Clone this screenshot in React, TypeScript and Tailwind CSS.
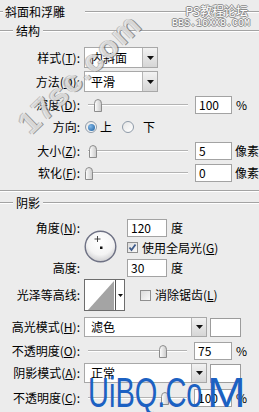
import React from "react";

const U = ({ c }: { c: string }) => <span className="underline underline-offset-[1px]">{c}</span>;

function Line({ className = "" }: { className?: string }) {
  return <div className={"h-0 border-t border-t-[#a3a3a3] border-b border-b-white " + className} />;
}

function Label({ children }: { children: React.ReactNode }) {
  return <div className="w-[80px] shrink-0 text-right whitespace-nowrap">{children}</div>;
}

function Arrow() {
  return (
    <div className="w-[15px] h-full shrink-0 border-l border-[#b5b5b5] bg-gradient-to-b from-[#f2f2f2] to-[#d6d6d6] flex items-center justify-center">
      <svg width="7" height="4" viewBox="0 0 7 4"><path d="M0 0 H7 L3.5 4 Z" fill="#111" /></svg>
    </div>
  );
}

function Select({ w, text }: { w: string; text: string }) {
  return (
    <div className={"h-full bg-white border border-[#a8a8a8] flex items-center " + w}>
      <div className="flex-1 pl-[6px] whitespace-nowrap">{text}</div>
      <Arrow />
    </div>
  );
}

function Input({ v, w = "w-[37px]" }: { v: string; w?: string }) {
  return (
    <div className={"h-[18px] bg-white border border-[#a3a3a3] flex items-center pl-[3px] shrink-0 " + w}>{v}</div>
  );
}

function Slider({ pos, w = "w-[100px]" }: { pos: number; w?: string }) {
  return (
    <div className={"relative h-[18px] shrink-0 " + w}>
      <div className="absolute left-0 right-0 top-[8px] h-0 border-t border-t-[#b3b3b3] border-b border-b-white" />
      <svg className="absolute top-[3px]" style={{ left: pos }} width="10" height="13" viewBox="0 0 10 13">
        <defs>
          <linearGradient id="tg" x1="0" x2="1" y1="0" y2="0">
            <stop offset="0" stopColor="#ffffff" />
            <stop offset="1" stopColor="#c9c9c9" />
          </linearGradient>
        </defs>
        <path d="M1.5 4.5 Q1.5 0.5 5 0.5 Q8.5 0.5 8.5 4.5 L8.5 12.5 L1.5 12.5 Z" fill="url(#tg)" stroke="#8c8c8c" strokeWidth="1" />
      </svg>
    </div>
  );
}

function Radio({ on }: { on?: boolean }) {
  return (
    <div className="w-[12px] h-[12px] rounded-full border border-[#8e9aa8] bg-gradient-to-br from-[#e6e6e6] to-[#ffffff] flex items-center justify-center shrink-0">
      {on && <div className="w-[7px] h-[7px] rounded-full bg-[radial-gradient(circle_at_35%_35%,#7fb6e8,#1d5f9e)]" />}
    </div>
  );
}

function Check({ on }: { on?: boolean }) {
  return (
    <div className="w-[11px] h-[11px] border border-[#8f8f8f] bg-gradient-to-br from-[#dcdcdc] to-[#fafafa] flex items-center justify-center shrink-0">
      {on && (
        <svg width="9" height="9" viewBox="0 0 9 9"><path d="M1.5 4.5 L3.5 7 L7.5 1.5" fill="none" stroke="#3d5a8a" strokeWidth="1.8" /></svg>
      )}
    </div>
  );
}

function Group({ t }: { t: string }) {
  return (
    <div className="flex items-center h-[16px]">
      <Line className="w-[13px]" />
      <span className="px-[3px]">{t}</span>
      <Line className="flex-1" />
    </div>
  );
}

export default function App() {
  return (
    <div className="relative w-[259px] h-[412px] overflow-hidden bg-[#ececec] text-[12px] leading-none text-black font-['Noto_Sans_CJK_SC',sans-serif]">
      <div className="flex flex-col">
        {/* title */}
        <div className="mt-[4px] flex items-center h-[16px]">
          <Line className="w-[3px]" />
          <span className="pl-[2px] pr-[20px]">斜面和浮雕</span>
          <Line className="flex-1" />
        </div>
        <div className="mt-[3px]"><Group t="结构" /></div>

        <div className="mt-[8px] flex items-center h-[21px]">
          <Label>样式(<U c="T" />):</Label>
          <div className="ml-[4px] h-full"><Select w="w-[74px]" text="内斜面" /></div>
        </div>
        <div className="mt-[3px] flex items-center h-[21px]">
          <Label>方法(<U c="Q" />):</Label>
          <div className="ml-[4px] h-full"><Select w="w-[74px]" text="平滑" /></div>
        </div>
        <div className="mt-[4px] flex items-center h-[18px]">
          <Label>深度(<U c="D" />):</Label>
          <div className="ml-[8px]"><Slider pos={5} /></div>
          <div className="ml-[7px]"><Input v="100" /></div>
          <span className="ml-[4px]">%</span>
        </div>
        <div className="mt-[4px] flex items-center h-[18px]">
          <Label>方向:</Label>
          <div className="ml-[5px]"><Radio on /></div>
          <span className="ml-[3px]">上</span>
          <div className="ml-[10px]"><Radio /></div>
          <span className="ml-[9px]">下</span>
        </div>
        <div className="mt-[6px] flex items-center h-[18px]">
          <Label>大小(<U c="Z" />):</Label>
          <div className="ml-[8px]"><Slider pos={0} /></div>
          <div className="ml-[7px]"><Input v="5" /></div>
          <span className="ml-[3px]">像素</span>
        </div>
        <div className="mt-[4px] flex items-center h-[18px]">
          <Label>软化(<U c="F" />):</Label>
          <div className="ml-[8px]"><Slider pos={-4} /></div>
          <div className="ml-[7px]"><Input v="0" /></div>
          <span className="ml-[3px]">像素</span>
        </div>

        <Line className="mt-[8px]" />
        <div className="mt-[3px]"><Group t="阴影" /></div>

        {/* angle block */}
        <div className="mt-[8px] flex h-[58px]">
          <div className="w-[80px] shrink-0 flex flex-col justify-between">
            <div className="h-[18px] flex items-center justify-end">角度(<U c="N" />):</div>
            <div className="h-[18px] flex items-center justify-end">高度:</div>
          </div>
          <div className="ml-[4px] mt-[11px]">
            <svg width="33" height="33" viewBox="0 0 33 33">
              <defs>
                <radialGradient id="cg" cx="0.5" cy="0.35" r="0.6">
                  <stop offset="0" stopColor="#ffffff" />
                  <stop offset="0.7" stopColor="#f4f4f4" />
                  <stop offset="1" stopColor="#d6d6d8" />
                </radialGradient>
              </defs>
              <circle cx="16.5" cy="16.5" r="15.3" fill="url(#cg)" stroke="#6e7184" strokeWidth="1.4" />
              <path d="M13.5 6 V12 M10.5 9 H16.5" stroke="#333" strokeWidth="0.9" />
              <rect x="16" y="16.5" width="2.5" height="2.5" fill="#111" />
            </svg>
          </div>
          <div className="ml-[10px] flex flex-col">
            <div className="flex items-center h-[18px]">
              <Input v="120" w="w-[40px]" />
              <span className="ml-[4px]">度</span>
            </div>
            <div className="flex items-center h-[21px]">
              <Check on />
              <span className="ml-[4px]">使用全局光(<U c="G" />)</span>
            </div>
            <div className="mt-[1px] flex items-center h-[18px]">
              <Input v="30" w="w-[40px]" />
              <span className="ml-[4px]">度</span>
            </div>
          </div>
        </div>

        <div className="mt-[2px] flex items-center h-[32px]">
          <Label>光泽等高线:</Label>
          <div className="ml-[4px] w-[41px] h-[32px] border border-[#6d6d6d] bg-white flex">
            <svg width="30" height="30" viewBox="0 0 30 30" className="shrink-0">
              <path d="M3 30 L29 1 L29 30 Z" fill="#a4a4a4" />
            </svg>
            <div className="flex-1 border-l border-[#555] flex items-center justify-center">
              <svg width="5" height="3" viewBox="0 0 5 3"><path d="M0 0 H5 L2.5 3 Z" fill="#111" /></svg>
            </div>
          </div>
          <div className="ml-[15px]"><Check /></div>
          <span className="ml-[4px]">消除锯齿(<U c="L" />)</span>
        </div>

        <div className="mt-[6px] flex items-center h-[20px]">
          <Label>高光模式(<U c="H" />):</Label>
          <div className="ml-[4px] h-full"><Select w="w-[123px]" text="滤色" /></div>
          <div className="ml-[3px] w-[31px] h-[19px] border border-[#9c9c9c] bg-white" />
        </div>
        <div className="mt-[5px] flex items-center h-[18px]">
          <Label>不透明度(<U c="O" />):</Label>
          <div className="ml-[8px]"><Slider pos={70} w="w-[99px]" /></div>
          <div className="ml-[7px]"><Input v="75" w="w-[38px]" /></div>
          <span className="ml-[4px]">%</span>
        </div>
        <div className="mt-[3px] flex items-center h-[20px]">
          <Label>阴影模式(<U c="A" />):</Label>
          <div className="ml-[4px] h-full"><Select w="w-[123px]" text="正常" /></div>
          <div className="ml-[3px] w-[31px] h-[19px] border border-[#9c9c9c] bg-white" />
        </div>
        <div className="mt-[6px] flex items-center h-[18px]">
          <Label>不透明度(<U c="C" />):</Label>
          <div className="ml-[8px]"><Slider pos={72} w="w-[99px]" /></div>
          <div className="ml-[7px]"><Input v="100" w="w-[38px]" /></div>
          <span className="ml-[4px]">%</span>
        </div>
      </div>

      {/* watermarks */}
      <div className="absolute right-[9px] top-[5px] flex flex-col items-end text-white leading-none [text-shadow:1px_0_0_#8a8a8a,-1px_0_0_#8a8a8a,0_1px_0_#8a8a8a,0_-1px_0_#8a8a8a]">
        <div className="text-[12px] pr-[2px]">PS教程论坛</div>
        <div className="mt-[2px] text-[10px] font-['Liberation_Mono',monospace]">BBS.16XX8.COM</div>
      </div>

      <div className="absolute left-[-5px] top-[58px] w-[170px] text-center rotate-[-44deg] text-[31px] font-bold tracking-[2px] font-['Liberation_Sans',sans-serif] text-[#f4f4f4]/75 [text-shadow:1px_1px_0_rgba(80,80,80,0.6),-1px_-1px_0_rgba(160,160,160,0.6)]">
        17sc.com
      </div>

      <div className="absolute left-[88px] top-[371px] text-[43px] leading-none text-[#1c61c2] font-['Liberation_Sans',sans-serif] origin-left scale-x-[0.675] whitespace-nowrap">
        UiBQ.Co
      </div>
      <div className="absolute left-[207px] top-[371px] text-[43px] leading-none text-[#1c61c2] font-['Liberation_Sans',sans-serif] origin-left scale-x-[1.08]">
        M
      </div>
    </div>
  );
}
